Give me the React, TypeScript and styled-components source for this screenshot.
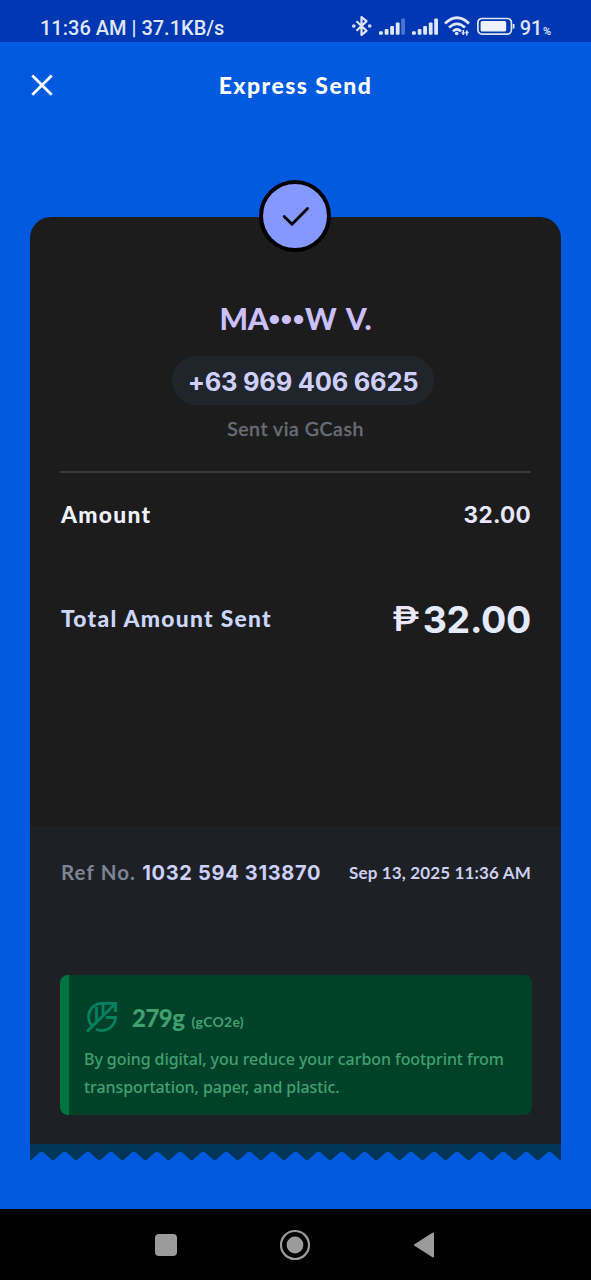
import React from "react";
import styled, { createGlobalStyle } from "styled-components";

const GlobalStyle = createGlobalStyle`
  * { box-sizing: border-box; }
  body { margin: 0; background: #005ae0; }
`;

const Screen = styled.div`
  width: 591px;
  height: 1280px;
  display: flex;
  flex-direction: column;
  overflow: hidden;
  background: #005ae0;
  font-family: Lato, "Liberation Sans", sans-serif;
`;

const StatusBar = styled.header`
  height: 42px;
  flex: none;
  display: flex;
  justify-content: space-between;
  padding: 12px 40px 0 40px;
  background: #0037b3;
  color: #dfe6fb;
  font-family: Roboto, sans-serif;
`;

const StatusText = styled.span`
  font-size: 20px;
  font-weight: 500;
  line-height: 32px;
`;

const StatusIcons = styled.div`
  display: flex;
  height: 30px;
`;

const Battery = styled.span`
  font-size: 20px;
  font-weight: 500;
  line-height: 32px;
  margin-left: 3px;
  white-space: nowrap;
  small { margin-left: 0.5px; font-size: 11px; font-weight: 600; }
`;

const TopBar = styled.nav`
  height: 88px;
  flex: none;
  display: grid;
  grid-template-columns: 60px 1fr 60px;
  align-items: center;
  padding: 0 0 1px 0;
`;

const CloseButton = styled.button`
  display: flex;
  border: 0;
  padding: 0 0 0 30px;
  background: none;
  height: 26px;
`;

const Title = styled.h1`
  margin: 0 0 2px;
  text-align: center;
  color: #fff;
  font-size: 23px;
  font-weight: 900;
  line-height: 30px;
  letter-spacing: 1.45px;
`;

const Receipt = styled.main`
  position: relative;
  width: 531px;
  margin: 87px 0 0 30px;
  flex: none;
  display: flex;
  flex-direction: column;
`;

const Badge = styled.div`
  position: absolute;
  left: 229px;
  top: -37px;
  width: 72px;
  height: 72px;
  border: 4px solid #000;
  border-radius: 50%;
  background: #8498ff;
`;

const Upper = styled.section`
  height: 610px;
  padding: 84px 30px 0 31px;
  border-radius: 21px 21px 0 0;
  background: #1c1c1c;
`;

const Recipient = styled.div`
  display: flex;
  flex-direction: column;
  align-items: center;
  height: 172px;
  border-bottom: 2px solid #373839;
  margin-left: -1px;
`;

const Name = styled.div`
  height: 36px;
  font-size: 30px;
  font-weight: 900;
  line-height: 35px;
  color: #cabfff;
  word-spacing: 3.5px;
  letter-spacing: -0.2px;
`;

const Mask = styled.span`
  font-family: "Liberation Sans", sans-serif;
  font-size: 32px;
  letter-spacing: 0.9px;
`;

const Phone = styled.div`
  width: 262px;
  height: 49px;
  margin: 19px 0 0 15px;
  border-radius: 25px;
  background: #20242b;
  color: #cfcfff;
  text-align: center;
  font-family: Inter, sans-serif;
  font-size: 25.5px;
  font-weight: 650;
  line-height: 52px;
  letter-spacing: -0.25px;
`;

const Via = styled.div`
  margin-top: 11px;
  font-size: 19.5px;
  font-weight: 500;
  line-height: 26px;
  letter-spacing: 0.55px;
  -webkit-text-stroke: 0.35px;
  color: #696d76;
`;

const Row = styled.div<{ $gap: number }>`
  display: flex;
  justify-content: space-between;
  align-items: center;
  height: 44px;
  margin-top: ${(p) => p.$gap}px;
`;

const Label = styled.span<{ $tone: string }>`
  font-size: 22.8px;
  font-weight: 900;
  letter-spacing: 1.3px;
  color: ${(p) => p.$tone};
`;

const Value = styled.span`
  font-family: Inter, sans-serif;
  font-size: 22.5px;
  font-weight: 700;
  letter-spacing: 0.3px;
  color: #e6e6fc;
`;

const Total = styled.span`
  margin-top: 3px;
  font-family: Inter, sans-serif;
  font-size: 37.5px;
  font-weight: 700;
  color: #e3e9ff;
  letter-spacing: -0.3px;
`;

const Peso = styled.span`
  display: inline-block;
  margin-right: 4px;
  font-size: 34px;
  font-weight: 500;
  line-height: 40px;
  transform: translateY(-2px) scaleX(1.18);
  transform-origin: right center;
  color: #ece8fb;
`;

const Lower = styled.section`
  height: 317px;
  padding: 30px 29px 0 30px;
  background: #1d2125;
`;

const Reference = styled.div`
  display: flex;
  justify-content: space-between;
  align-items: center;
  height: 30px;
  padding: 0 1px;
`;

const RefNo = styled.span`
  font-size: 20.5px;
  font-weight: 700;
  letter-spacing: 1.1px;
  color: #7f8494;
  white-space: nowrap;
`;

const RefNumber = styled.b`
  font-family: Inter, sans-serif;
  font-size: 20px;
  font-weight: 650;
  letter-spacing: 0.7px;
  color: #cdd0fb;
`;

const Stamp = styled.span`
  font-size: 17px;
  font-weight: 700;
  letter-spacing: 0.15px;
  color: #ccd0ef;
  white-space: nowrap;
`;

const Eco = styled.aside`
  height: 140px;
  margin-top: 88px;
  padding: 23px 0 0 15px;
  border-left: 9px solid #007440;
  border-radius: 8px;
  background: #004229;
  color: #40a070;
`;

const EcoHead = styled.div`
  display: flex;
  align-items: center;
  height: 38px;
`;

const EcoAmount = styled.strong`
  margin-left: 14px;
  font-size: 24px;
  font-weight: 900;
  letter-spacing: -0.5px;
`;

const EcoUnit = styled.span`
  margin: 9px 0 0 7px;
  font-size: 14px;
  font-weight: 700;
  letter-spacing: 0.25px;
`;

const EcoCopy = styled.p`
  margin: 10px 0 0;
  font-family: "Noto Sans", sans-serif;
  font-size: 16px;
  font-weight: 500;
  line-height: 27.5px;
  letter-spacing: -0.07px;
  white-space: nowrap;
`;

const Torn = styled.svg`
  display: block;
`;

const NavBar = styled.footer`
  height: 71px;
  margin-top: auto;
  flex: none;
  display: flex;
  justify-content: center;
  align-items: center;
  gap: 102px;
  padding-right: 1px;
  background: #000;
`;

const teeth = Array.from({ length: 23 }, (_, i) => {
  const x = (i * 531) / 23;
  return `L${x + 1} 16 L${x + 9.8} 8.2 Q${x + 11.5} 7.2 ${x + 13.3} 8.2 L${x + 22} 16`;
}).join(" ");

const Signal = ({ weak }: { weak?: boolean }) => (
  <svg width="33" height="30" viewBox="0 0 33 30" fill="#dfe6fb">
    <rect x="0" y="19.2" width="3.8" height="3.6" rx="1" />
    <rect x="5.7" y="17" width="3.8" height="5.8" rx="1" />
    <rect x="11.2" y="14" width="3.8" height="8.8" rx="1" />
    <rect x="16.8" y="10.5" width="3.8" height="12.3" rx="1" />
    <rect x="22.2" y="6.5" width="3.8" height="16.3" rx="1" opacity={weak ? 0.35 : 1} />
  </svg>
);

export default function App() {
  return (
    <Screen>
      <GlobalStyle />
      <StatusBar>
        <StatusText>11:36 AM | 37.1KB/s</StatusText>
        <StatusIcons>
          <svg width="27" height="30" viewBox="1 0 27 30" fill="none" stroke="#dfe6fb" strokeWidth="2.2">
            <path d="M5.5 9.2 15.5 18.8 10.5 23V5L15.5 9.2 5.5 18.8" strokeLinejoin="round" />
            <circle cx="2.8" cy="14" r=".7" />
            <circle cx="18.7" cy="14" r=".7" />
          </svg>
          <Signal weak />
          <Signal />
          <svg width="33" height="30" viewBox="1 0 33 30" fill="none" stroke="#dfe6fb" strokeWidth="2.7" overflow="visible">
            <path d="M1 11.5Q13 0 25 11.5" />
            <path d="M5 15.6Q13 8 21 15.6" />
            <path d="M9 19.4Q13 15.4 17 19.4" />
            <circle cx="12.7" cy="21.5" r="1.8" fill="#dfe6fb" stroke="none" />
            <path d="M19.3 18v5M22.8 18.5v5" strokeWidth="1.5" />
            <path d="M17.7 21h3M21.3 20.5h3.2" strokeWidth="1.5" />
          </svg>
          <svg width="39" height="30" viewBox="1 0 39 30" overflow="visible">
            <rect x=".9" y="6.5" width="33.5" height="15.6" rx="4" fill="none" stroke="#dfe6fb" strokeWidth="1.7" />
            <rect x="3.6" y="9" width="25.6" height="10.6" rx="1.5" fill="#eef1fe" />
            <path d="M36.6 12v4.6" stroke="#dfe6fb" strokeWidth="1.8" />
          </svg>
          <Battery>91<small>%</small></Battery>
        </StatusIcons>
      </StatusBar>
      <TopBar>
        <CloseButton aria-label="Close">
          <svg width="24" height="24" viewBox="0 0 24 24" stroke="#fff" strokeWidth="2.7">
            <path d="M2.3 2.5 21.7 21.7M21.7 2.5 2.3 21.7" />
          </svg>
        </CloseButton>
        <Title>Express Send</Title>
      </TopBar>
      <Receipt>
        <Upper>
          <Recipient>
            <Name>MA<Mask>•••</Mask>W V.</Name>
            <Phone>+63 969 406 6625</Phone>
            <Via>Sent via GCash</Via>
          </Recipient>
          <Row $gap={19}>
            <Label $tone="#eef1fb">Amount</Label>
            <Value>32.00</Value>
          </Row>
          <Row $gap={60}>
            <Label $tone="#cbd6ff">Total Amount Sent</Label>
            <Total><Peso>₱</Peso>32.00</Total>
          </Row>
        </Upper>
        <Lower>
          <Reference>
            <RefNo>Ref No. <RefNumber>1032 594 313870</RefNumber></RefNo>
            <Stamp>Sep 13, 2025 11:36 AM</Stamp>
          </Reference>
          <Eco>
            <EcoHead>
              <svg width="34" height="34" viewBox="0 0 34 34" fill="none" stroke="#04815f" strokeWidth="2.8">
                <path d="M3 31.5 31 4" />
                <path d="M33 3.3H19C4 3.3 1 19 8.5 26M12 29.5C22 33 31 27 31.5 17.5H22" />
                <path d="M12.5 7v14M19 4v11M31.5 3v9" />
              </svg>
              <EcoAmount>279g</EcoAmount>
              <EcoUnit>(gCO2e)</EcoUnit>
            </EcoHead>
            <EcoCopy>
              By going digital, you reduce your carbon footprint from
              <br />
              transportation, paper, and plastic.
            </EcoCopy>
          </Eco>
        </Lower>
        <Torn width="531" height="17" viewBox="0 0 531 17">
          <path d={`M0 0V16 ${teeth} L531 16V0Z`} fill="#003657" />
        </Torn>
        <Badge>
          <svg width="64" height="64" viewBox="0 0 64 64" fill="none" stroke="#000" strokeWidth="2.8" strokeLinecap="round" strokeLinejoin="round">
            <path d="M21.2 32.5 29 40.2 44.5 24.5" />
          </svg>
        </Badge>
      </Receipt>
      <NavBar>
        <svg width="22" height="22"><rect width="22" height="22" rx="4" fill="#9b9b9b" /></svg>
        <svg width="32" height="32" viewBox="0 0 32 32">
          <circle cx="16" cy="16" r="14" fill="none" stroke="#9b9b9b" strokeWidth="2.2" />
          <circle cx="16" cy="16" r="8.4" fill="#9b9b9b" />
        </svg>
        <svg width="22" height="28" viewBox="0 0 22 28">
          <path d="M20 2.5V25.5L2 14Z" fill="#9b9b9b" stroke="#9b9b9b" strokeWidth="2" strokeLinejoin="round" />
        </svg>
      </NavBar>
    </Screen>
  );
}
